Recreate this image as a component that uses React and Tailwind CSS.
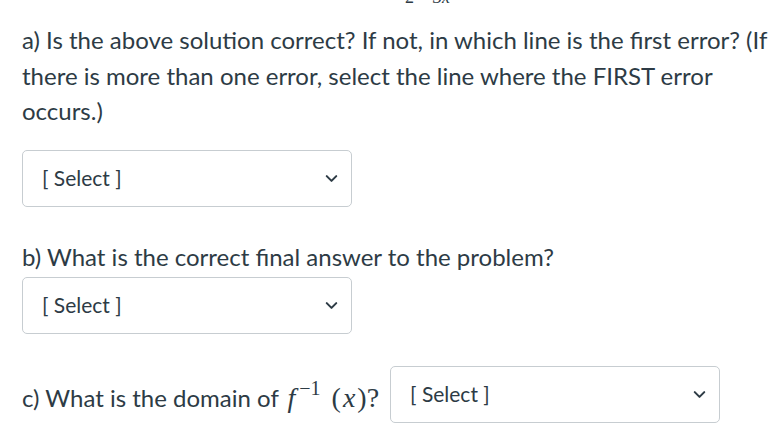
import { ChevronDown } from 'lucide-react';

const SelectBox = ({ className = '' }) => (
  <div
    className={`w-[330px] h-[57px] border border-[#c7cdd1] rounded-[5px] bg-white flex items-center justify-between pl-[19px] pr-[10px] ${className}`}
  >
    <span className="text-[21px] text-[#2d3b45]">[ Select ]</span>
    <ChevronDown className="w-[19px] h-[19px] text-[#2d3b45]" strokeWidth={2.6} />
  </div>
);

const serif = { fontFamily: '"Liberation Serif", "DejaVu Serif", serif' };

export default function App() {
  return (
    <div
      className="w-[771px] h-[446px] bg-white overflow-hidden text-[#2d3b45]"
      style={{ fontFamily: 'Lato, "Open Sans", sans-serif' }}
    >
      {/* bottom of the math above, cut off by the crop */}
      <div className="h-[4px] overflow-hidden relative">
        <span className="absolute left-[405px] top-[-12px] text-[18px] leading-none" style={serif}>
          2
        </span>
        <span className="absolute left-[433px] top-[-12px] text-[18px] leading-none italic" style={serif}>
          3x
        </span>
      </div>

      <div className="pl-[22px] pr-[4px]">
        <p className="mt-[18px] text-[24px] leading-[35.5px]">
          a) Is the above solution correct? If not, in which line is the first error? (If there is more than one
          error, select the line where the FIRST error occurs.)
        </p>

        <SelectBox className="mt-[21px]" />

        <p className="mt-[32px] text-[24px] leading-[36px]">b) What is the correct final answer to the problem?</p>

        <SelectBox className="mt-[2px]" />

        <div className="mt-[32px] flex items-center">
          <span className="text-[24px] leading-[36px] mt-[10px] whitespace-nowrap">
            c) What is the domain of{' '}
            <span style={serif} className="text-[28px] ml-[3px]">
              <i>f</i>
              <span className="inline-block text-[20px] relative top-[-12px] ml-[4px]">−1</span>
              <span className="ml-[11px]">(</span>
              <i className="px-[2px]">x</i>
              <span>)</span>
              <span>?</span>
            </span>
          </span>
          <SelectBox className="ml-[11px]" />
        </div>
      </div>
    </div>
  );
}
